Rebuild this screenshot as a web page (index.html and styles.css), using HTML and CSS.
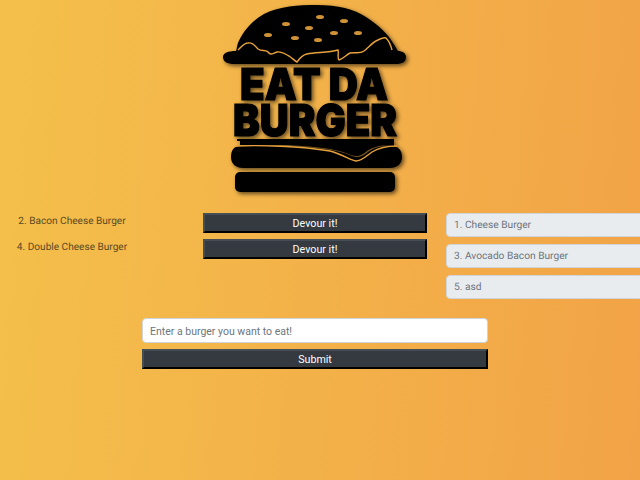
FILE: index.html
```html
<!DOCTYPE html>
<html lang="en">
<head>
<meta charset="utf-8">
<title>Eat Da Burger</title>
<link rel="stylesheet" href="styles.css">
</head>
<body>
<header class="logo-wrap">
  <svg class="logo" viewBox="220 0 200 200" width="200" height="200" aria-label="Eat Da Burger">
    <path d="M238 43C244 30 252 21 264 14C280 6 298 5 317 5C338 5 354 9 366 17C378 25 387 33 393 43C396 47 397 50 398 51C402 51 406 53 406 57C406 62 402 64 396 64L234 64C228 64 223 62 223 57C223 53 228 51 236 51C237 48 237 46 238 43Z" fill="#000"/>
    <path class="wave" d="M238 50C241 47 244 43 248 43C253 42 255 46 258 49C262 52 265 49 268 52C271 56 273 53 277 52C282 51 285 54 289 56C292 58 295 61 297 62C299 59 302 55 307 54C316 52 328 53 338 50C339 53 337 58 339 60C343 59 346 55 350 53C355 52 360 54 364 51C369 47 372 43 376 41C380 39 384 37 386 38C389 41 391 46 392 50"/>
    <g class="seeds">
      <ellipse cx="320" cy="17" rx="4" ry="2"/>
      <ellipse cx="286" cy="24" rx="4" ry="2"/>
      <ellipse cx="344" cy="21" rx="4" ry="2"/>
      <ellipse cx="309" cy="28" rx="4" ry="2"/>
      <ellipse cx="268" cy="35" rx="4" ry="2"/>
      <ellipse cx="295" cy="38" rx="4" ry="2"/>
      <ellipse cx="334" cy="33" rx="4" ry="2"/>
      <ellipse cx="358" cy="33" rx="4" ry="2"/>
      <ellipse cx="318" cy="40" rx="4" ry="2"/>
    </g>
    <text class="logo-text logo-text-top" x="240" y="100" textLength="148" lengthAdjust="spacingAndGlyphs">EAT DA</text>
    <text class="logo-text" x="233" y="136" textLength="164" lengthAdjust="spacingAndGlyphs">BURGER</text>
    <rect x="237" y="139" width="157" height="2" fill="#000"/>
    <path d="M240 146L288 146C320 148 340 150 352 156C358 158 362 157 368 152C376 146 384 146 392 146C398 146 402 150 402 157C402 164 397 168 390 168L243 168C236 168 231 164 231 157C231 150 234 146 240 146Z" fill="#000"/>
    <path d="M240 141L394 141L394 146C384 145 376 145 367 151C361 156 358 157 351 155C338 149 320 147 288 145L240 145Z" fill="#000"/>
    <path class="wave" d="M236 146C260 145 300 146 330 151C342 154 350 160 356 161C362 161 366 156 372 152C380 147 388 146 397 146"/>
    <rect x="235" y="172" width="160" height="20" rx="5" fill="#000"/>
  </svg>
</header>

<main class="burgers">
  <div class="uneaten">
    <div class="burger-row">
      <span class="burger-name">2. Bacon Cheese Burger</span>
      <button class="btn btn-devour" type="button">Devour it!</button>
    </div>
    <div class="burger-row">
      <span class="burger-name">4. Double Cheese Burger</span>
      <button class="btn btn-devour" type="button">Devour it!</button>
    </div>
  </div>
  <div class="eaten">
    <div class="eaten-item">1. Cheese Burger</div>
    <div class="eaten-item">3. Avocado Bacon Burger</div>
    <div class="eaten-item">5. asd</div>
  </div>
</main>

<form class="add-form">
  <input class="add-input" type="text" placeholder="Enter a burger you want to eat!">
  <button class="btn btn-submit" type="button">Submit</button>
</form>
</body>
</html>
```

FILE: styles.css
```css
* { box-sizing: border-box; }

html, body { height: 100%; }

body {
  margin: 0;
  overflow: hidden;
  background: linear-gradient(95deg, #f4c04b 0%, #f2a347 100%);
  font-family: Roboto, "Open Sans", sans-serif;
  font-size: 10.1px;
  color: #5a4a24;
  text-rendering: geometricPrecision;
}

.logo-wrap {
  display: flex;
  justify-content: center;
  height: 213px;
}

.logo {
  display: block;
  filter: drop-shadow(2px 2px 2px rgba(0, 0, 0, 0.6));
}

.wave {
  fill: none;
  stroke: #e8a23c;
  stroke-width: 1.4;
}

.seeds { fill: #cf9236; }

.logo-text {
  font-family: Inter, "Liberation Sans", sans-serif;
  font-size: 44px;
  font-weight: 900;
  fill: #000;
  stroke: #000;
  stroke-width: 1.2px;
}

.burgers {
  display: grid;
  grid-template-columns: 427px 1fr;
  column-gap: 19px;
}

.uneaten {
  display: flex;
  flex-direction: column;
  gap: 6px;
}

.burger-row {
  display: grid;
  grid-template-columns: 144px 224px;
  column-gap: 59px;
  align-items: start;
}

.burger-name {
  text-align: center;
  white-space: nowrap;
  line-height: 17px;
}

.btn {
  display: block;
  width: 100%;
  height: 20px;
  padding: 1px 0 0;
  background: #343a40;
  border: 2px outset #1b1e21;
  border-top-color: #454d55;
  border-left-color: #454d55;
  border-right-color: #000;
  border-bottom-color: #000;
  color: #fff;
  font: inherit;
  font-size: 10.7px;
  line-height: 15px;
}

.eaten {
  display: flex;
  flex-direction: column;
  gap: 7px;
}

.eaten-item {
  height: 24px;
  padding: 0 7px;
  background: #e9ecef;
  border: 1px solid #ced4da;
  border-radius: 4px;
  color: #6c757d;
  font-size: 10.2px;
  line-height: 24px;
  margin-right: -4px;
}

.add-form {
  width: 346px;
  margin: 0 0 0 142px;
  padding-top: 19px;
  display: flex;
  flex-direction: column;
  gap: 6px;
}

.add-input {
  width: 100%;
  height: 25px;
  padding: 1px 7px 0;
  background: #fff;
  border: 1px solid #ced4da;
  border-radius: 4px;
  font-family: inherit;
  font-size: 10.5px;
  color: #495057;
}

.add-input::placeholder { color: #6c757d; opacity: 1; }
```
